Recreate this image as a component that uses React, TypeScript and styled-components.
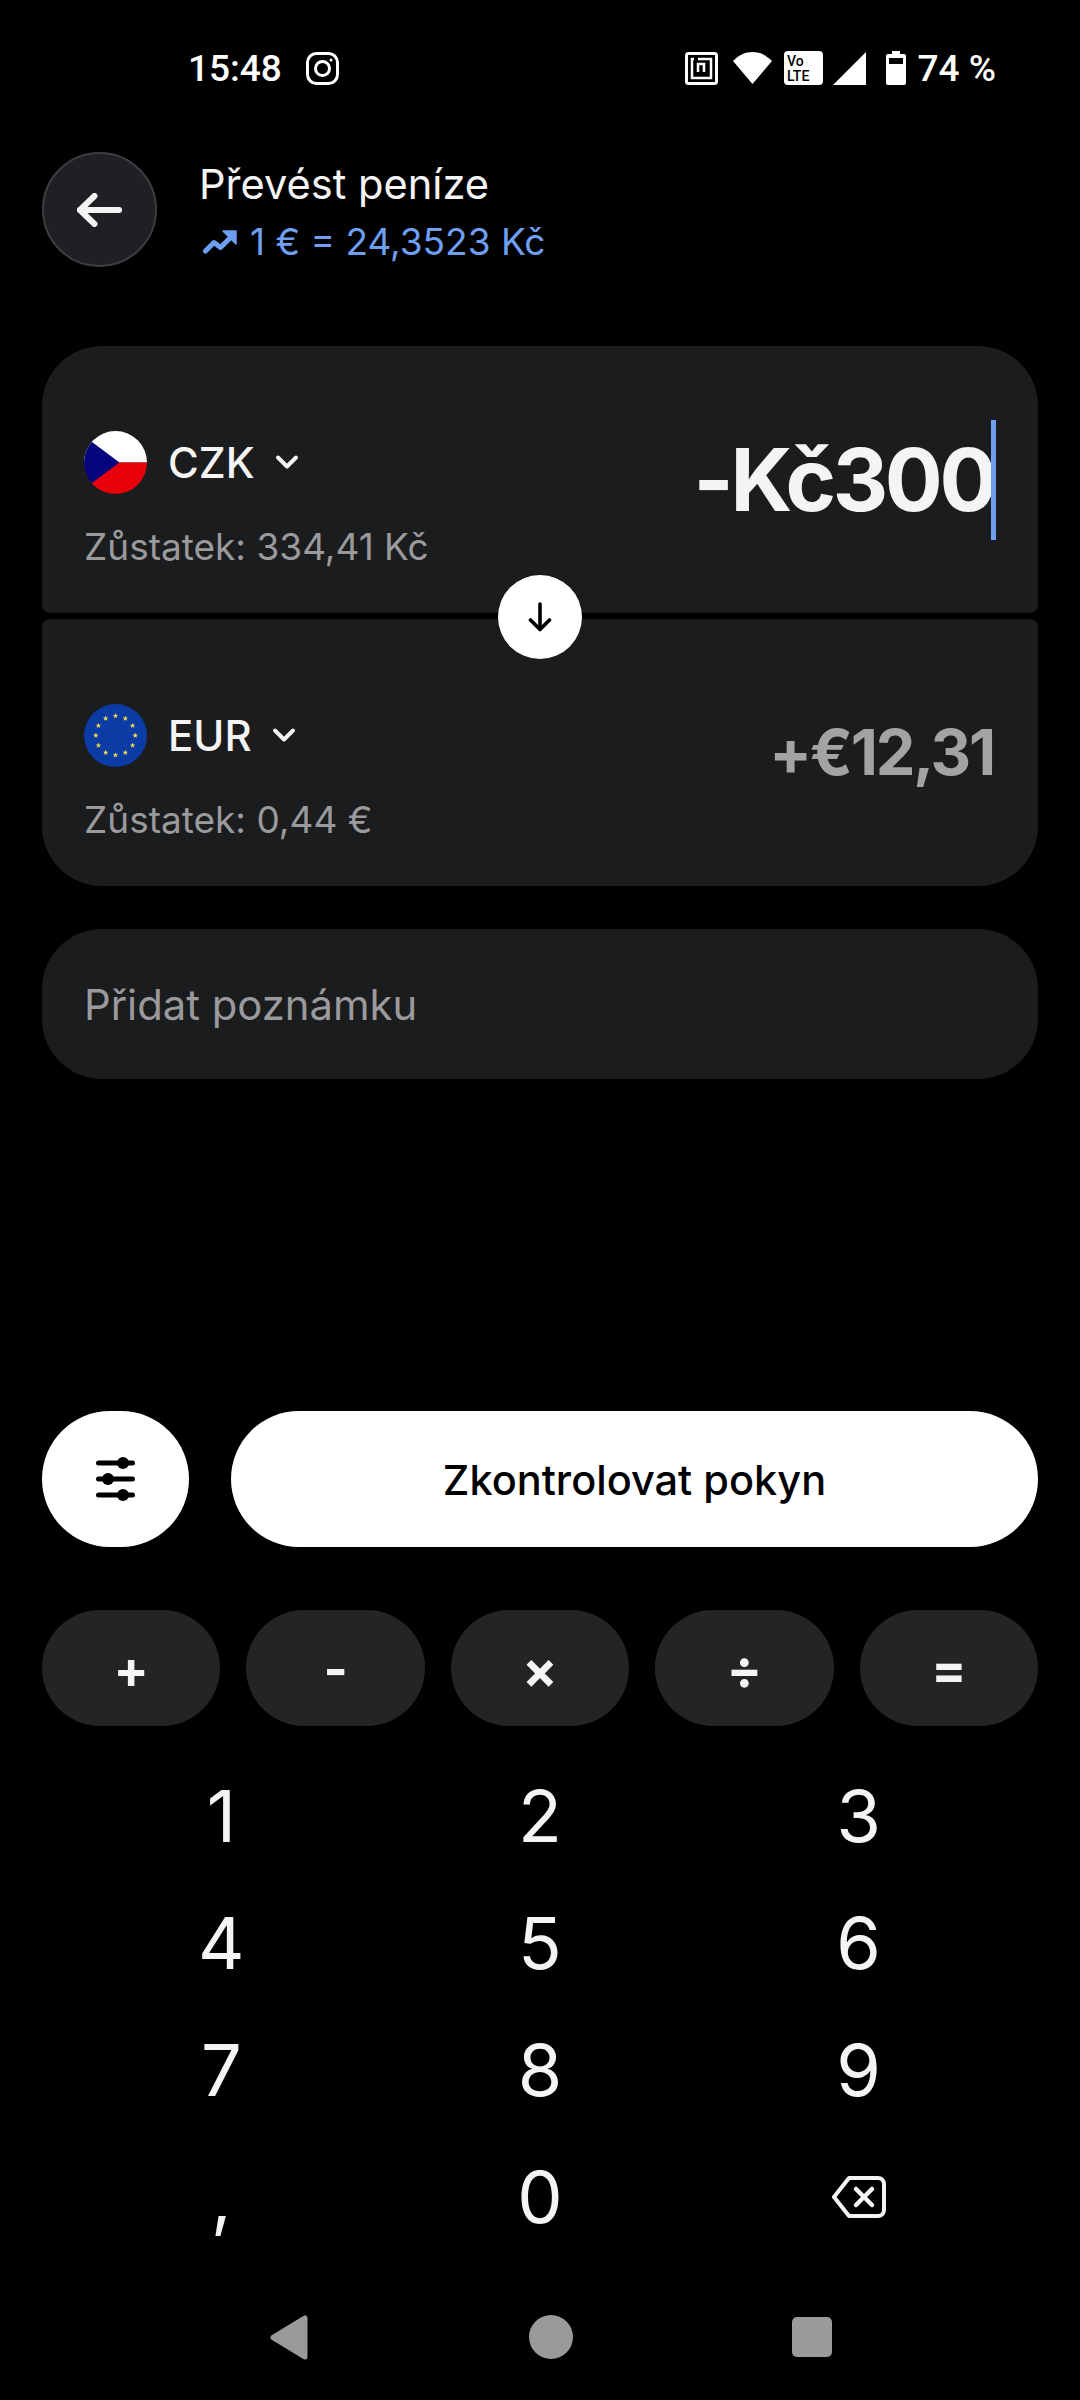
import React from "react";
import styled, { createGlobalStyle } from "styled-components";
import { ChevronDown } from "lucide-react";

const GlobalStyle = createGlobalStyle`
  html, body {
    margin: 0;
    padding: 0;
    background: #000;
  }
  * {
    box-sizing: border-box;
  }
`;

const Screen = styled.div`
  width: 1080px;
  height: 2400px;
  background: #000;
  color: #f4f4f5;
  font-family: Inter, "Liberation Sans", sans-serif;
  display: flex;
  flex-direction: column;
  overflow: hidden;
`;

const StatusBar = styled.div`
  height: 134px;
  padding: 2px 84px 0 188px;
  display: flex;
  align-items: center;
  justify-content: space-between;
  font-family: Roboto, sans-serif;
  font-size: 37px;
  font-weight: 500;
  color: #fff;
`;

const StatusGroup = styled.div`
  display: flex;
  align-items: center;
`;

const StatusSlot = styled.span<{ $after: number }>`
  display: flex;
  margin-right: ${(p) => p.$after}px;
`;

const Header = styled.div`
  height: 115px;
  margin: 18px 42px 0;
  display: flex;
  align-items: center;
  gap: 42px;
`;

const BackButton = styled.div`
  width: 115px;
  height: 115px;
  border-radius: 50%;
  background: #1f2023;
  border: 2px solid #3c3d40;
  display: flex;
  align-items: center;
  justify-content: center;
`;

const HeaderText = styled.div`
  display: flex;
  flex-direction: column;
  gap: 10px;
  padding-top: 5px;
`;

const Title = styled.div`
  font-size: 41.6px;
  line-height: 50px;
  color: #f4f4f5;
`;

const Rate = styled.div`
  display: flex;
  align-items: center;
  gap: 13px;
  padding-left: 4px;
  font-size: 37px;
  line-height: 46px;
  color: #6f9ff2;
`;

const Exchange = styled.div`
  position: relative;
  margin: 79px 42px 0;
  display: flex;
  flex-direction: column;
  gap: 6px;
`;

const Card = styled.div<{ $top?: boolean }>`
  height: 267px;
  background: #1b1c1e;
  border-radius: ${(p) => (p.$top ? "60px 60px 8px 8px" : "8px 8px 60px 60px")};
  padding: 84px 42px 0;
  display: flex;
  justify-content: space-between;
`;

const CardLeft = styled.div`
  display: flex;
  flex-direction: column;
  gap: 31px;
`;

const CurrencyRow = styled.div`
  height: 64px;
  display: flex;
  align-items: center;
  font-size: 42px;
  font-weight: 500;
  color: #f4f4f5;
`;

const CurrencyCode = styled.span`
  margin: 0 14px 0 21px;
`;

const Balance = styled.div`
  font-size: 37px;
  line-height: 44px;
  color: #9a9a9d;
`;

const Amount = styled.div<{ $muted?: boolean }>`
  display: flex;
  align-items: center;
  height: ${(p) => (p.$muted ? 64 : 120)}px;
  margin-top: ${(p) => (p.$muted ? 17 : -10)}px;
  margin-right: ${(p) => (p.$muted ? 2 : 0)}px;
  font-size: ${(p) => (p.$muted ? 63 : 86)}px;
  font-weight: 700;
  letter-spacing: ${(p) => (p.$muted ? -2.2 : -3.4)}px;
  color: ${(p) => (p.$muted ? "#a3a3a5" : "#f4f4f5")};
`;

const Caret = styled.span`
  width: 5px;
  height: 120px;
  background: #6f9ff2;
  margin-left: -3px;
`;

const SwapButton = styled.div`
  position: absolute;
  left: 456px;
  top: 229px;
  width: 84px;
  height: 84px;
  border-radius: 50%;
  background: #fff;
  display: flex;
  align-items: center;
  justify-content: center;
`;

const NoteField = styled.div`
  height: 150px;
  margin: 43px 42px 0;
  padding: 2px 42px 0;
  border-radius: 60px;
  background: #1b1c1e;
  display: flex;
  align-items: center;
  font-size: 41.8px;
  color: #9a9a9d;
`;

const Actions = styled.div`
  height: 136px;
  margin: 332px 42px 0;
  display: flex;
  gap: 42px;
`;

const FilterButton = styled.div`
  width: 147px;
  border-radius: 68px;
  background: #fff;
  display: flex;
  align-items: center;
  justify-content: center;
`;

const ReviewButton = styled.div`
  flex: 1;
  padding-top: 2px;
  border-radius: 68px;
  background: #fff;
  color: #000;
  display: flex;
  align-items: center;
  justify-content: center;
  font-size: 41.5px;
  font-weight: 450;
`;

const Operators = styled.div`
  height: 116px;
  margin: 63px 42px 0;
  display: grid;
  grid-template-columns: repeat(5, 1fr);
  gap: 26px;
`;

const Operator = styled.div`
  border-radius: 58px;
  background: #232426;
  display: flex;
  align-items: center;
  justify-content: center;
  font-size: 52px;
  font-weight: 700;
  color: #f4f4f5;
  padding-top: 3px;
`;

const Keypad = styled.div`
  margin: 26px 62px 0;
  display: grid;
  grid-template-columns: repeat(3, 1fr);
  grid-auto-rows: 127px;
`;

const Key = styled.div`
  display: flex;
  align-items: center;
  justify-content: center;
  font-size: 72px;
  color: #f4f4f5;
`;

const NavBar = styled.div`
  margin-top: 52px;
  height: 50px;
  padding: 0 248px 0 270px;
  display: flex;
  align-items: center;
  justify-content: space-between;
`;

const FlagFrame = styled.svg`
  width: 63px;
  height: 63px;
  flex: none;
`;

const CzechFlag = () => (
  <FlagFrame viewBox="0 0 64 64">
    <defs>
      <clipPath id="czClip">
        <circle cx="32" cy="32" r="32" />
      </clipPath>
    </defs>
    <g clipPath="url(#czClip)">
      <rect width="64" height="32" fill="#fff" />
      <rect y="32" width="64" height="32" fill="#e8000b" />
      <path d="M0 5L36 32L0 59Z" fill="#04047c" />
    </g>
  </FlagFrame>
);

const euStars = Array.from({ length: 12 }, (_, i) => {
  const a = (i * Math.PI) / 6;
  return { x: 32 + 20 * Math.sin(a), y: 32 - 20 * Math.cos(a) };
});

const EuFlag = () => (
  <FlagFrame viewBox="0 0 64 64">
    <circle cx="32" cy="32" r="32" fill="#0b3ba5" />
    {euStars.map((s, i) => (
      <path
        key={i}
        transform={`translate(${s.x} ${s.y})`}
        d="M0-2.8L.8-.9L2.7-.9L1.2.4L1.8 2.4L0 1.2L-1.8 2.4L-1.2.4L-2.7-.9L-.8-.9Z"
        fill="#f6d94a"
      />
    ))}
  </FlagFrame>
);

const TrendIcon = () => (
  <svg width="34" height="24" viewBox="0 0 34 24">
    <path
      d="M2.5 21L11 12.5L17.5 17.5L28 7"
      fill="none"
      stroke="#6f9ff2"
      strokeWidth="5"
      strokeLinecap="round"
      strokeLinejoin="round"
    />
    <path d="M20 1H33V14Z" fill="#6f9ff2" stroke="#6f9ff2" strokeWidth="1.5" strokeLinejoin="round" />
  </svg>
);

const BackArrow = () => (
  <svg width="45" height="34" viewBox="0 0 45 34" fill="none" stroke="#f4f4f5" strokeWidth="6" strokeLinecap="round" strokeLinejoin="round">
    <path d="M3 17H42" />
    <path d="M17.5 3L3 17L17.5 31" />
  </svg>
);

const SwapArrow = () => (
  <svg width="24" height="30" viewBox="0 0 24 30" fill="none" stroke="#000" strokeWidth="3.6" strokeLinecap="round" strokeLinejoin="round">
    <path d="M12 2V27" />
    <path d="M2.5 18L12 27.5L21.5 18" />
  </svg>
);

const SlidersIcon = () => (
  <svg width="39" height="46" viewBox="0 0 39 46" fill="#000" stroke="#000">
    <g strokeWidth="5" strokeLinecap="round">
      <path d="M2.5 7H36.5" />
      <path d="M2.5 23H36.5" />
      <path d="M2.5 39H36.5" />
    </g>
    <circle cx="27" cy="7" r="6" strokeWidth="0" />
    <circle cx="12" cy="23" r="6" strokeWidth="0" />
    <circle cx="27" cy="39" r="6" strokeWidth="0" />
  </svg>
);

const BackspaceIcon = () => (
  <svg width="54" height="42" viewBox="0 0 54 42" fill="none" stroke="#f4f4f5" strokeWidth="4" strokeLinecap="round" strokeLinejoin="round">
    <path d="M17 2H46A6 6 0 0 1 52 8V34A6 6 0 0 1 46 40H17L2 21Z" />
    <path d="M24 13L40 29M40 13L24 29" strokeWidth="4.5" />
  </svg>
);

const InstagramIcon = () => (
  <svg width="33" height="33" viewBox="0 0 33 33" fill="none" stroke="#fff" strokeWidth="3">
    <rect x="1.5" y="1.5" width="30" height="30" rx="9" />
    <circle cx="16.5" cy="16.5" r="7" />
    <circle cx="25" cy="8" r="1.5" fill="#fff" strokeWidth="0" />
  </svg>
);

const NfcIcon = () => (
  <svg width="33" height="33" viewBox="0 0 33 33" fill="none" stroke="#fff">
    <rect x="1.5" y="1.5" width="30" height="30" rx="2" strokeWidth="3" />
    <path d="M13 7H26V26H7V7H9" strokeWidth="2.5" />
    <path d="M13 20V12H19V20" strokeWidth="2.5" />
  </svg>
);

const WifiIcon = () => (
  <svg width="39" height="32" viewBox="0 0 39 32">
    <path d="M19.5 32L0 9C6 3 12 0 19.5 0C27 0 33 3 39 9Z" fill="#fff" />
  </svg>
);

const VolteIcon = () => (
  <svg width="39" height="34" viewBox="0 0 39 34">
    <rect width="39" height="34" rx="4" fill="#fff" />
    <text x="3" y="15" fontFamily="Roboto, sans-serif" fontSize="14" fontWeight="500" fill="#000">
      Vo
    </text>
    <text x="3" y="30" fontFamily="Roboto, sans-serif" fontSize="14" fontWeight="500" fill="#000">
      LTE
    </text>
  </svg>
);

const SignalIcon = () => (
  <svg width="33" height="33" viewBox="0 0 33 33">
    <path d="M33 0V33H0Z" fill="#fff" />
  </svg>
);

const BatteryIcon = () => (
  <svg width="20" height="34" viewBox="0 0 20 34">
    <path d="M6 0H14V3H18A2 2 0 0 1 20 5V32A2 2 0 0 1 18 34H2A2 2 0 0 1 0 32V5A2 2 0 0 1 2 3H6Z" fill="#fff" />
    <rect x="3" y="7" width="14" height="6" fill="#000" />
  </svg>
);

const NavBack = () => (
  <svg width="39" height="45" viewBox="0 0 39 45">
    <path d="M3 22.5L35 3V42Z" fill="#9a9a9a" stroke="#9a9a9a" strokeWidth="5" strokeLinejoin="round" />
  </svg>
);

const NavHome = () => (
  <svg width="44" height="44" viewBox="0 0 44 44">
    <circle cx="22" cy="22" r="22" fill="#9a9a9a" />
  </svg>
);

const NavRecent = () => (
  <svg width="40" height="40" viewBox="0 0 40 40">
    <rect width="40" height="40" rx="5" fill="#9a9a9a" />
  </svg>
);

const operators = ["+", "-", "×", "÷", "="];
const digits = ["1", "2", "3", "4", "5", "6", "7", "8", "9", ","];

export default function App() {
  return (
    <>
      <GlobalStyle />
      <Screen>
        <StatusBar>
          <StatusGroup>
            <StatusSlot $after={24}>15:48</StatusSlot>
            <InstagramIcon />
          </StatusGroup>
          <StatusGroup>
            <StatusSlot $after={15}>
              <NfcIcon />
            </StatusSlot>
            <StatusSlot $after={12}>
              <WifiIcon />
            </StatusSlot>
            <StatusSlot $after={10}>
              <VolteIcon />
            </StatusSlot>
            <StatusSlot $after={20}>
              <SignalIcon />
            </StatusSlot>
            <StatusSlot $after={12}>
              <BatteryIcon />
            </StatusSlot>
            <span>74 %</span>
          </StatusGroup>
        </StatusBar>
        <Header>
          <BackButton>
            <BackArrow />
          </BackButton>
          <HeaderText>
            <Title>Převést peníze</Title>
            <Rate>
              <TrendIcon />
              <span>1 € = 24,3523 Kč</span>
            </Rate>
          </HeaderText>
        </Header>
        <Exchange>
          <Card $top>
            <CardLeft>
              <CurrencyRow>
                <CzechFlag />
                <CurrencyCode>CZK</CurrencyCode>
                <ChevronDown size={36} strokeWidth={2.6} />
              </CurrencyRow>
              <Balance>Zůstatek: 334,41 Kč</Balance>
            </CardLeft>
            <Amount>
              -Kč300
              <Caret />
            </Amount>
          </Card>
          <Card>
            <CardLeft>
              <CurrencyRow>
                <EuFlag />
                <CurrencyCode>EUR</CurrencyCode>
                <ChevronDown size={36} strokeWidth={2.6} />
              </CurrencyRow>
              <Balance>Zůstatek: 0,44 €</Balance>
            </CardLeft>
            <Amount $muted>+€12,31</Amount>
          </Card>
          <SwapButton>
            <SwapArrow />
          </SwapButton>
        </Exchange>
        <NoteField>Přidat poznámku</NoteField>
        <Actions>
          <FilterButton>
            <SlidersIcon />
          </FilterButton>
          <ReviewButton>Zkontrolovat pokyn</ReviewButton>
        </Actions>
        <Operators>
          {operators.map((op) => (
            <Operator key={op}>{op}</Operator>
          ))}
        </Operators>
        <Keypad>
          {digits.map((d) => (
            <Key key={d}>{d}</Key>
          ))}
          <Key>0</Key>
          <Key>
            <BackspaceIcon />
          </Key>
        </Keypad>
        <NavBar>
          <NavBack />
          <NavHome />
          <NavRecent />
        </NavBar>
      </Screen>
    </>
  );
}
